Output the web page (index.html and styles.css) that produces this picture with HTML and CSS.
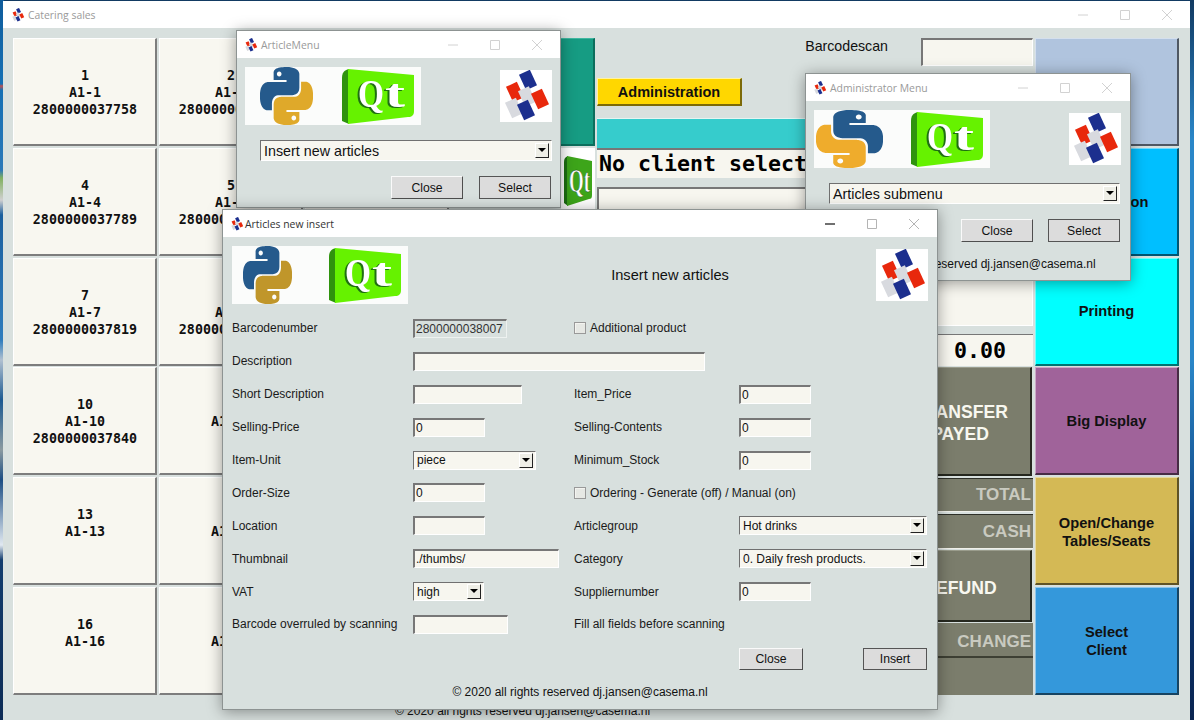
FILE: index.html
```html
<!DOCTYPE html>
<html lang="en">
<head>
<meta charset="utf-8">
<title>Catering sales</title>
<link rel="stylesheet" href="styles.css">
</head>
<body>
<svg class="defs" width="0" height="0" aria-hidden="true">
  <symbol id="py-top" viewBox="0 0 24 24" preserveAspectRatio="none">
    <path fill-rule="evenodd" d="M14.25.18l.9.2.73.26.59.3.45.32.34.34.25.34.16.33.1.3.04.26.02.2-.01.13V8.5l-.05.63-.13.55-.21.46-.26.38-.3.31-.33.25-.35.19-.35.14-.33.1-.3.07-.26.04-.21.02H8.77l-.69.05-.59.14-.5.22-.41.27-.33.32-.27.35-.2.36-.15.37-.1.35-.07.32-.04.27-.02.21v3.06H3.17l-.21-.03-.28-.07-.32-.12-.35-.18-.36-.26-.36-.36-.35-.46-.32-.59-.28-.73-.21-.88-.14-1.05-.05-1.23.06-1.22.16-1.04.24-.87.32-.71.36-.57.4-.44.42-.33.42-.24.4-.16.36-.1.32-.05.24-.01h.16l.06.01h8.16v-.83H6.18l-.01-2.75-.02-.37.05-.34.11-.31.17-.28.25-.26.31-.23.38-.2.44-.18.51-.15.58-.12.64-.1.71-.06.77-.04.84-.02 1.27.05zm-6.3 1.98l-.23.33-.08.41.08.41.23.34.33.22.41.09.41-.09.33-.22.23-.34.08-.41-.08-.41-.23-.33-.33-.22-.41-.09-.41.09z"/>
  </symbol>
  <symbol id="py-bottom" viewBox="0 0 24 24" preserveAspectRatio="none">
    <path fill-rule="evenodd" d="M21.04 6.11l.28.06.32.12.35.18.36.27.36.35.35.47.32.59.28.73.21.88.14 1.04.05 1.23-.06 1.23-.16 1.04-.24.86-.32.71-.36.57-.4.45-.42.33-.42.24-.4.16-.36.09-.32.05-.24.02-.16-.01h-8.22v.82h5.84l.01 2.76.02.36-.05.34-.11.31-.17.29-.25.25-.31.24-.38.2-.44.17-.51.15-.58.13-.64.09-.71.07-.77.04-.84.01-1.27-.04-1.07-.14-.9-.2-.73-.25-.59-.3-.45-.33-.34-.34-.25-.34-.16-.33-.1-.3-.04-.25-.02-.2.01-.13v-5.34l.05-.64.13-.54.21-.46.26-.38.3-.32.33-.24.35-.2.35-.14.33-.1.3-.06.26-.04.21-.02.13-.01h5.84l.69-.05.59-.14.5-.21.41-.28.33-.32.27-.35.2-.36.15-.36.1-.35.07-.32.04-.28.02-.21V6.07h2.09l.14.01zm-6.47 14.25l-.23.33-.08.41.08.41.23.33.33.23.41.08.41-.08.33-.23.23-.33.08-.41-.08-.41-.23-.33-.33-.23-.41-.08-.41.08z"/>
  </symbol>
  <symbol id="qt" viewBox="0 0 72 55" preserveAspectRatio="none">
    <path fill="#2f930e" d="M7 0C2 1 0 4 0 9V52L7 55Z"/>
    <path fill="#66f200" d="M6 0L72 6V42C72 46 70 48 66 48L6 55Z"/>
  </symbol>
  <symbol id="co" viewBox="0 0 52 52">
    <rect class="co-b" x="22" y="1.5" width="12" height="17" transform="rotate(-25 28 10)"/>
    <rect class="co-r" x="9" y="13.5" width="12" height="17" transform="rotate(-25 15 22)"/>
    <rect class="co-g" x="21" y="18" width="12" height="17" transform="rotate(-25 27 26.5)"/>
    <rect class="co-r" x="34" y="20.5" width="12" height="17" transform="rotate(-25 40 29)"/>
    <rect class="co-g" x="8" y="29.5" width="12" height="17" transform="rotate(-25 14 38)"/>
    <rect class="co-b" x="20" y="31.5" width="12" height="17" transform="rotate(-25 26 40)"/>
  </symbol>
  <symbol id="win-min" viewBox="0 0 12 12"><path d="M1 6H11"/></symbol>
  <symbol id="win-max" viewBox="0 0 12 12"><path d="M1.5 1.5H10.5V10.5H1.5Z"/></symbol>
  <symbol id="win-close" viewBox="0 0 12 12"><path d="M1 1L11 11M11 1L1 11"/></symbol>
</svg>

<div class="main">
  <div class="titlebar inactive">
    <svg class="title-ico"><use href="#co"/></svg>
    <span class="title-text">Catering sales</span>
    <div class="controls">
      <svg class="ctl"><use href="#win-min"/></svg>
      <svg class="ctl"><use href="#win-max"/></svg>
      <svg class="ctl"><use href="#win-close"/></svg>
    </div>
  </div>
  <div class="board">
    <button class="tile">1<br>A1-1<br>2800000037758</button>
    <button class="tile">2<br>A1-2<br>2800000037765</button>
    <button class="tile">3<br>A1-3<br>2800000037772</button>
    <button class="tile teal"></button>
    <div class="mid">
      <div class="scan"><span class="scan-label">Barcodescan</span><input class="field scan-input"></div>
      <button class="admin">Administration</button>
      <div class="cyanbar"></div>
      <div class="client">No client selected</div>
      <div class="field address"></div>
      <div class="amount">0.00</div>
      <div class="pay">
        <div class="pay-left"></div>
        <div class="pay-col">
          <button class="paybtn transfer">TRANSFER<br>PAYED</button>
          <div class="paylabel total">TOTAL</div>
          <div class="paylabel cash">CASH</div>
          <button class="paybtn refund">REFUND</button>
          <div class="paylabel change">CHANGE</div>
          <div class="payrest"></div>
        </div>
      </div>
    </div>
    <div class="side">
      <button class="action a-blue"></button>
      <button class="action a-sky">Reservation</button>
      <button class="action a-cyan">Printing</button>
      <button class="action a-purple">Big Display</button>
      <button class="action a-gold">Open/Change<br>Tables/Seats</button>
      <button class="action a-azure">Select<br>Client</button>
    </div>
    <button class="tile">4<br>A1-4<br>2800000037789</button>
    <button class="tile">5<br>A1-5<br>2800000037796</button>
    <button class="tile">6<br>A1-6<br>2800000037802</button>
    <div class="qtsmall">
      <svg viewBox="0 0 34 61">
        <rect width="34" height="61" fill="#fff"/>
        <path fill="#1d6f12" d="M7 8C4 9 3 11 3 14V55L7 58Z"/>
        <path fill="#3da51a" d="M6 8L31 13V47C31 50 30 51 28 51L6 58Z"/>
        <text class="qt-small-text" x="8" y="44" font-size="34" textLength="21" lengthAdjust="spacingAndGlyphs">Qt</text>
      </svg>
    </div>
    <button class="tile">7<br>A1-7<br>2800000037819</button>
    <button class="tile">8<br>A1-8<br>2800000037826</button>
    <button class="tile">9<br>A1-9<br>&nbsp;</button>
    <button class="tile">&nbsp;</button>
    <button class="tile">10<br>A1-10<br>2800000037840</button>
    <button class="tile">11<br>A1-11<br>&nbsp;</button>
    <button class="tile">12<br>A1-12<br>&nbsp;</button>
    <button class="tile">&nbsp;</button>
    <button class="tile">13<br>A1-13<br>&nbsp;</button>
    <button class="tile">14<br>A1-14<br>&nbsp;</button>
    <button class="tile">15<br>A1-15<br>&nbsp;</button>
    <button class="tile">&nbsp;</button>
    <button class="tile">16<br>A1-16<br>&nbsp;</button>
    <button class="tile">17<br>A1-17<br>&nbsp;</button>
    <button class="tile">18<br>A1-18<br>&nbsp;</button>
    <button class="tile">&nbsp;</button>
  </div>
  <div class="main-foot">© 2020 all rights reserved dj.jansen@casema.nl</div>
</div>

<section class="win win-article">
  <div class="titlebar inactive">
    <svg class="title-ico"><use href="#co"/></svg>
    <span class="title-text">ArticleMenu</span>
    <div class="controls">
      <svg class="ctl"><use href="#win-min"/></svg>
      <svg class="ctl"><use href="#win-max"/></svg>
      <svg class="ctl"><use href="#win-close"/></svg>
    </div>
  </div>
  <div class="menu-body">
    <div class="menu-head">
      <svg class="brand" viewBox="0 0 176 58">
        <rect width="176" height="58" fill="#fbfcfb"/>
        <use class="py-blue" href="#py-top" x="15" y="0" width="53" height="58"/>
        <use class="py-yellow" href="#py-bottom" x="15" y="0" width="53" height="58"/>
        <use href="#qt" x="97" y="2" width="72" height="55"/>
        <text class="qt-face" x="113" y="40" font-size="41" textLength="26" lengthAdjust="spacingAndGlyphs">Q</text>
        <text class="qt-face" x="140" y="40" font-size="40" textLength="20" lengthAdjust="spacingAndGlyphs">t</text>
      </svg>
      <svg class="company"><use href="#co"/></svg>
    </div>
    <div class="combo combo-menu"><span>Insert new articles</span><i class="arrow"></i></div>
    <div class="menu-actions">
      <button class="qbtn">Close</button>
      <button class="qbtn default">Select</button>
    </div>
  </div>
</section>

<section class="win win-admin">
  <div class="titlebar inactive">
    <svg class="title-ico"><use href="#co"/></svg>
    <span class="title-text">Administrator Menu</span>
    <div class="controls">
      <svg class="ctl"><use href="#win-min"/></svg>
      <svg class="ctl"><use href="#win-max"/></svg>
      <svg class="ctl"><use href="#win-close"/></svg>
    </div>
  </div>
  <div class="menu-body">
    <div class="menu-head">
      <svg class="brand" viewBox="0 0 176 58">
        <rect width="176" height="58" fill="#fbfcfb"/>
        <g transform="translate(71 0) scale(-1 1)">
          <use class="py-blue" href="#py-top" x="2" y="0" width="67" height="58"/>
          <use class="py-yellow-bright" href="#py-bottom" x="2" y="0" width="67" height="58"/>
        </g>
        <use href="#qt" x="97" y="2" width="72" height="55"/>
        <text class="qt-face" x="113" y="40" font-size="41" textLength="26" lengthAdjust="spacingAndGlyphs">Q</text>
        <text class="qt-face" x="140" y="40" font-size="40" textLength="20" lengthAdjust="spacingAndGlyphs">t</text>
      </svg>
      <svg class="company"><use href="#co"/></svg>
    </div>
    <div class="combo combo-menu combo-admin"><span>Articles submenu</span><i class="arrow"></i></div>
    <div class="menu-actions admin-actions">
      <button class="qbtn">Close</button>
      <button class="qbtn default">Select</button>
    </div>
    <p class="copy admin-copy">© 2020 all rights reserved dj.jansen@casema.nl</p>
  </div>
</section>

<section class="win win-insert">
  <div class="titlebar">
    <svg class="title-ico"><use href="#co"/></svg>
    <span class="title-text">Articles new insert</span>
    <div class="controls">
      <svg class="ctl on"><use href="#win-min"/></svg>
      <svg class="ctl"><use href="#win-max"/></svg>
      <svg class="ctl"><use href="#win-close"/></svg>
    </div>
  </div>
  <div class="insert-body">
    <div class="insert-head">
      <svg class="brand" viewBox="0 0 176 58">
        <rect width="176" height="58" fill="#fbfcfb"/>
        <use class="py-blue" href="#py-top" x="11" y="0" width="49" height="58"/>
        <use class="py-yellow-dark" href="#py-bottom" x="11" y="0" width="49" height="58"/>
        <use href="#qt" x="97" y="2" width="72" height="55"/>
        <text class="qt-face" x="113" y="40" font-size="41" textLength="26" lengthAdjust="spacingAndGlyphs">Q</text>
        <text class="qt-face" x="140" y="40" font-size="40" textLength="20" lengthAdjust="spacingAndGlyphs">t</text>
      </svg>
      <h1 class="insert-title">Insert new articles</h1>
      <svg class="company"><use href="#co"/></svg>
    </div>
    <form class="form">
      <label>Barcodenumber</label>
      <input class="field readonly w94" value="2800000038007" readonly>
      <label class="check span2"><i class="box"></i>Additional product</label>

      <label>Description</label>
      <input class="field w292 span3">

      <label>Short Description</label>
      <input class="field w109">
      <label>Item_Price</label>
      <input class="field w72" value="0">

      <label>Selling-Price</label>
      <input class="field w72" value="0">
      <label>Selling-Contents</label>
      <input class="field w72" value="0">

      <label>Item-Unit</label>
      <div class="combo w123"><span>piece</span><i class="arrow"></i></div>
      <label>Minimum_Stock</label>
      <input class="field w72" value="0">

      <label>Order-Size</label>
      <input class="field w72" value="0">
      <label class="check span2"><i class="box"></i>Ordering - Generate (off) / Manual (on)</label>

      <label>Location</label>
      <input class="field w72">
      <label>Articlegroup</label>
      <div class="combo w188"><span>Hot drinks</span><i class="arrow"></i></div>

      <label>Thumbnail</label>
      <input class="field w146" value="./thumbs/">
      <label>Category</label>
      <div class="combo w188"><span>0. Daily fresh products.</span><i class="arrow"></i></div>

      <label>VAT</label>
      <div class="combo w71"><span>high</span><i class="arrow"></i></div>
      <label>Suppliernumber</label>
      <input class="field w72" value="0">

      <label>Barcode overruled by scanning</label>
      <input class="field w95">
      <label class="span2">Fill all fields before scanning</label>
    </form>
    <div class="insert-actions">
      <button class="qbtn">Close</button>
      <button class="qbtn default">Insert</button>
    </div>
    <p class="copy insert-copy">© 2020 all rights reserved dj.jansen@casema.nl</p>
  </div>
</section>
</body>
</html>
```

FILE: styles.css
```css
* { box-sizing: border-box; }
html, body { margin: 0; height: 720px; overflow: hidden; }
body {
  position: relative;
  width: 1194px;
  font-family: "Liberation Sans", Arial, sans-serif;
  color: #111;
  background:
    linear-gradient(180deg, #0f5c9c 0, #1570b4 84px, #c05050 86px, #1570b4 90px, #2a78b8 170px, #80b060 178px, #d0d0d0 200px, #1a5f9e 215px, #2f7dbd 340px, #b0c0d0 360px, #1c5a92 400px, #8a9aa0 450px, #1c4e84 480px, #e0e8f0 545px, #123d6e 560px, #0c2b55 720px) left top / 4px 100% no-repeat,
    linear-gradient(180deg, #123a62 0, #2a86c8 140px, #2a86c8 360px, #0c3a78 560px, #0a2450 720px);
}
.defs { position: absolute; }

/* main window */
.main {
  margin: 1px 4px 0 3px;
  height: 719px;
  background: #d8e0de;
  overflow: hidden;
}
.titlebar {
  display: flex;
  align-items: center;
  height: 27px;
  background: #fff;
  padding-left: 7px;
}
.main .titlebar { padding-left: 8px; }
.title-ico { width: 14px; height: 14px; flex: none; margin-right: 3px; }
.win-insert .title-ico { margin-right: 1px; }
.title-text { font-family: "Open Sans", sans-serif; font-size: 10.4px; color: #333; }
.inactive .title-text { color: #9a9a9a; }
.controls { margin-left: auto; display: flex; padding-right: 2px; }
.ctl { display: block; width: 12px; height: 12px; margin: 0 15px; fill: none; stroke: #d2d2d2; stroke-width: 1; }
.win-insert .ctl { stroke: #b4b4b4; }
.win-insert .ctl.on { stroke: #222; stroke-width: 1.3; }

.board {
  display: grid;
  grid-template-columns: repeat(4, 144px) 436px 144px;
  grid-auto-rows: 108px;
  gap: 1.8px 2px;
  padding: 10px 0 0 10px;
}
.tile {
  padding: 2px 0 0 1px;
  border: solid;
  border-width: 1px 2px 2px 1px;
  border-color: #fff #7d7d7d #7d7d7d #fff;
  background: #f8f7f0;
  font: bold 13.33px/17px "DejaVu Sans Mono", monospace;
  color: #111;
  text-align: center;
}
.teal { background: #169c83; border-color: #3fb7a0 #0c6e5c #0c6e5c #3fb7a0; }
.qtsmall { display: flex; background: #d8e0de; overflow: hidden; }
.qtsmall svg { display: block; flex: none; width: 34px; height: 61px; margin-left: 110px; }
.qt-small-text { font-family: "Liberation Serif", serif; font-weight: bold; fill: #fff; stroke: #174f10; stroke-width: .5; }

.mid {
  grid-column: 5;
  grid-row: 1 / span 6;
  display: flex;
  flex-direction: column;
}
.scan { display: flex; justify-content: flex-end; align-items: flex-start; height: 28px; flex: none; }
.scan-label { font-size: 14.2px; line-height: 17px; margin: 0 33px 0 0; }
.field.scan-input { width: 112px; height: 28px; }
.admin {
  margin-top: 12px;
  width: 145px;
  height: 28px;
  flex: none;
  background: #ffd700;
  border: solid;
  border-width: 1px 2px 2px 1px;
  border-color: #fff3a0 #7c6a08 #7c6a08 #fff3a0;
  font: bold 14.5px "Liberation Sans", sans-serif;
  color: #111;
  padding: 0;
}
.cyanbar { margin-top: 12px; height: 30px; flex: none; background: #36cccc; border-top: 1px solid #e4f4f2; }
.client {
  height: 30px;
  flex: none;
  background: #f7f6ef;
  border-top: 2px solid #777;
  font: bold 21.6px/27px "DejaVu Sans Mono", monospace;
  padding-left: 2px;
  white-space: nowrap;
  overflow: hidden;
  color: #000;
}
.field.address { margin-top: 9px; height: 139px; flex: none; }
.amount {
  margin-top: 8px;
  height: 32px;
  flex: none;
  background: #f7f6ef;
  border-top: 1px solid #777;
  font: bold 21.6px/31px "DejaVu Sans Mono", monospace;
  text-align: right;
  padding-right: 27px;
  color: #000;
}
.pay { display: flex; padding-top: 1px; flex: none; }
.pay-left { width: 292px; flex: none; }
.pay-col { width: 144px; display: flex; flex-direction: column; font-weight: bold; }
.paybtn {
  flex: none;
  background: #7b7d6c;
  border: solid;
  border-width: 1px 2px 2px 1px;
  border-color: #9a9c8c #26281f #26281f #9a9c8c;
  color: #f8f8f0;
  font: bold 17.6px/22px "Liberation Sans", sans-serif;
  padding: 0;
  text-align: center;
}
.transfer { height: 109px; padding-top: 4px; width: 143px; }
.paylabel {
  flex: none;
  background: #7b7d6c;
  color: #c9cac0;
  font-size: 17px;
  line-height: 32px;
  text-align: right;
  padding-right: 2px;
}
.total { margin-top: 2px; height: 34px; border-top: 1px solid #2e3028; border-bottom: 1px solid #f0f0ea; }
.cash { margin-top: 2px; height: 35px; line-height: 34px; border-top: 1px solid #2e3028; border-bottom: 1px solid #f0f0ea; }
.refund { height: 72px; margin-top: 1px; padding-top: 4px; width: 143px; }
.change { height: 35px; margin-top: 1px; line-height: 38px; border-bottom: 2px solid #3d3f33; }
.payrest { height: 37px; flex: none; background: #7b7d6c; }

.side { grid-column: 6; grid-row: 1 / span 6; display: grid; grid-auto-rows: 108px; row-gap: 1.8px; }
.action {
  padding: 1px 0 0;
  border: solid;
  border-width: 1px 2px 2px 1px;
  border-color: rgba(255,255,255,.45) rgba(0,0,0,.55) rgba(0,0,0,.55) rgba(255,255,255,.45);
  font: bold 14.67px/18px "Liberation Sans", sans-serif;
  color: #111;
  text-align: center;
}
.a-blue { background: #b0c4de; }
.a-sky { background: #00bfff; }
.a-cyan { background: #00ffff; padding-top: 0; }
.a-purple { background: #a0639a; }
.a-gold { background: #d4b955; padding-top: 3px; }
.a-azure { background: #3498db; }

.main-foot {
  width: 1039px;
  text-align: center;
  font-size: 12px;
  line-height: 16px;
  margin-top: 8px;
}

/* floating windows */
.win {
  position: absolute;
  background: #d8e0de;
  border: 1px solid #8d9392;
  box-shadow: 0 2px 14px rgba(0,0,0,.38);
}
.win-article { left: 236px; top: 30px; width: 325px; height: 178px; }
.win-admin { left: 805px; top: 73px; width: 326px; height: 208px; }
.win-insert { left: 222px; top: 209px; width: 716px; height: 501px; }

.brand { display: block; width: 176px; height: 58px; flex: none; }
.company { display: block; width: 52px; height: 52px; background: #fff; flex: none; margin-top: 3px; }
.co-r { fill: #e8280c; }
.co-b { fill: #1c2f8e; }
.co-g { fill: #d8dadf; }
.py-blue { fill: #255a8c; }
.py-yellow { fill: #dfa92a; }
.py-yellow-bright { fill: #efac2c; }
.py-yellow-dark { fill: #c0962a; }
.qt-face {
  font-family: "Liberation Serif", serif;
  font-weight: bold;
  fill: #fff;
  filter: drop-shadow(-1.5px 1px 0 #1f6f12);
}

.menu-body { padding: 9px 8px 0; }
.menu-head { display: flex; justify-content: space-between; }
.win-admin .company { margin-right: 1px; }
.combo {
  display: flex;
  align-items: center;
  justify-content: space-between;
  height: 20px;
  background: #f7f6ef;
  border: solid;
  border-width: 1px;
  border-color: #707070 #fff #fff #707070;
  padding: 0 2px 0 3px;
  font-size: 12px;
  white-space: nowrap;
}
.combo-menu { margin: 15px 0 0 15px; height: 21px; font-size: 14.3px; }
.combo-admin { margin: 15px 2px 0 15px; }
.arrow {
  position: relative;
  display: block;
  width: 14px;
  height: 15px;
  background: #eeeee6;
  border: solid;
  border-width: 1px;
  border-color: #fff #222 #222 #fff;
  flex: none;
}
.arrow::after {
  content: "";
  position: absolute;
  left: 2px;
  top: 4px;
  border-style: solid;
  border-width: 4px 4px 0;
  border-color: #000 transparent transparent;
}
.menu-actions { display: flex; justify-content: flex-end; gap: 16px; margin-top: 15px; padding-right: 1px; }
.admin-actions { gap: 15px; padding-right: 2px; }
.qbtn {
  width: 72px;
  height: 23px;
  padding: 0;
  background: #dcdcdc;
  border: solid;
  border-width: 1px;
  border-color: #fafafa #4e4e4e #4e4e4e #fafafa;
  font: 12.2px "Liberation Sans", sans-serif;
  color: #111;
}
.qbtn.default { border-color: #555; outline: 1px solid #d8e0de; }
.copy { margin: 0; text-align: center; font-size: 12px; line-height: 16px; color: #111; }
.admin-copy { margin-top: 14px; }

.insert-body { padding: 9px 9px 0; }
.insert-head { display: flex; }
.insert-title {
  flex: 1;
  margin: 0;
  font-size: 14.6px;
  font-weight: normal;
  text-align: center;
  line-height: 58px;
  padding: 0 0 0 56px;
}
.form {
  display: grid;
  grid-template-columns: 181px 161px 165px 189px;
  grid-auto-rows: 32.9px;
  align-items: center;
  margin-top: 8px;
  font-size: 12px;
}
.form label { color: #1a1a1a; white-space: nowrap; }
.field {
  display: block;
  background: #f7f6ef;
  border: solid;
  border-width: 2px 1px 1px 2px;
  border-color: #777 #fff #fff #777;
  padding: 0 1px;
  font: 12px "Liberation Sans", sans-serif;
  color: #111;
  height: 19px;
  outline: none;
}
.readonly { background: #d8e0de; border-color: #777 #eef2f0 #eef2f0 #777; color: #333; }
.w72 { width: 72px; }
.w94 { width: 94px; }
.w95 { width: 95px; }
.w109 { width: 109px; }
.w146 { width: 146px; }
.w292 { width: 292px; }
.w71 { width: 71px; height: 19px; }
.w123 { width: 123px; height: 19px; }
.w188 { width: 188px; height: 19px; }
.span2 { grid-column: span 2; }
.span3 { grid-column: span 3; }
.check { display: flex; align-items: center; gap: 4px; }
.box {
  display: block;
  width: 12px;
  height: 12px;
  background: #e6e8e4;
  border: 1px solid #999;
  box-shadow: inset 1px 1px 0 #f4f4f0;
}
.insert-actions { display: flex; justify-content: flex-end; gap: 60px; margin-top: 7px; padding-right: 1px; }
.insert-actions .qbtn { width: 64px; height: 22px; }
.insert-copy { margin-top: 14px; }
```
